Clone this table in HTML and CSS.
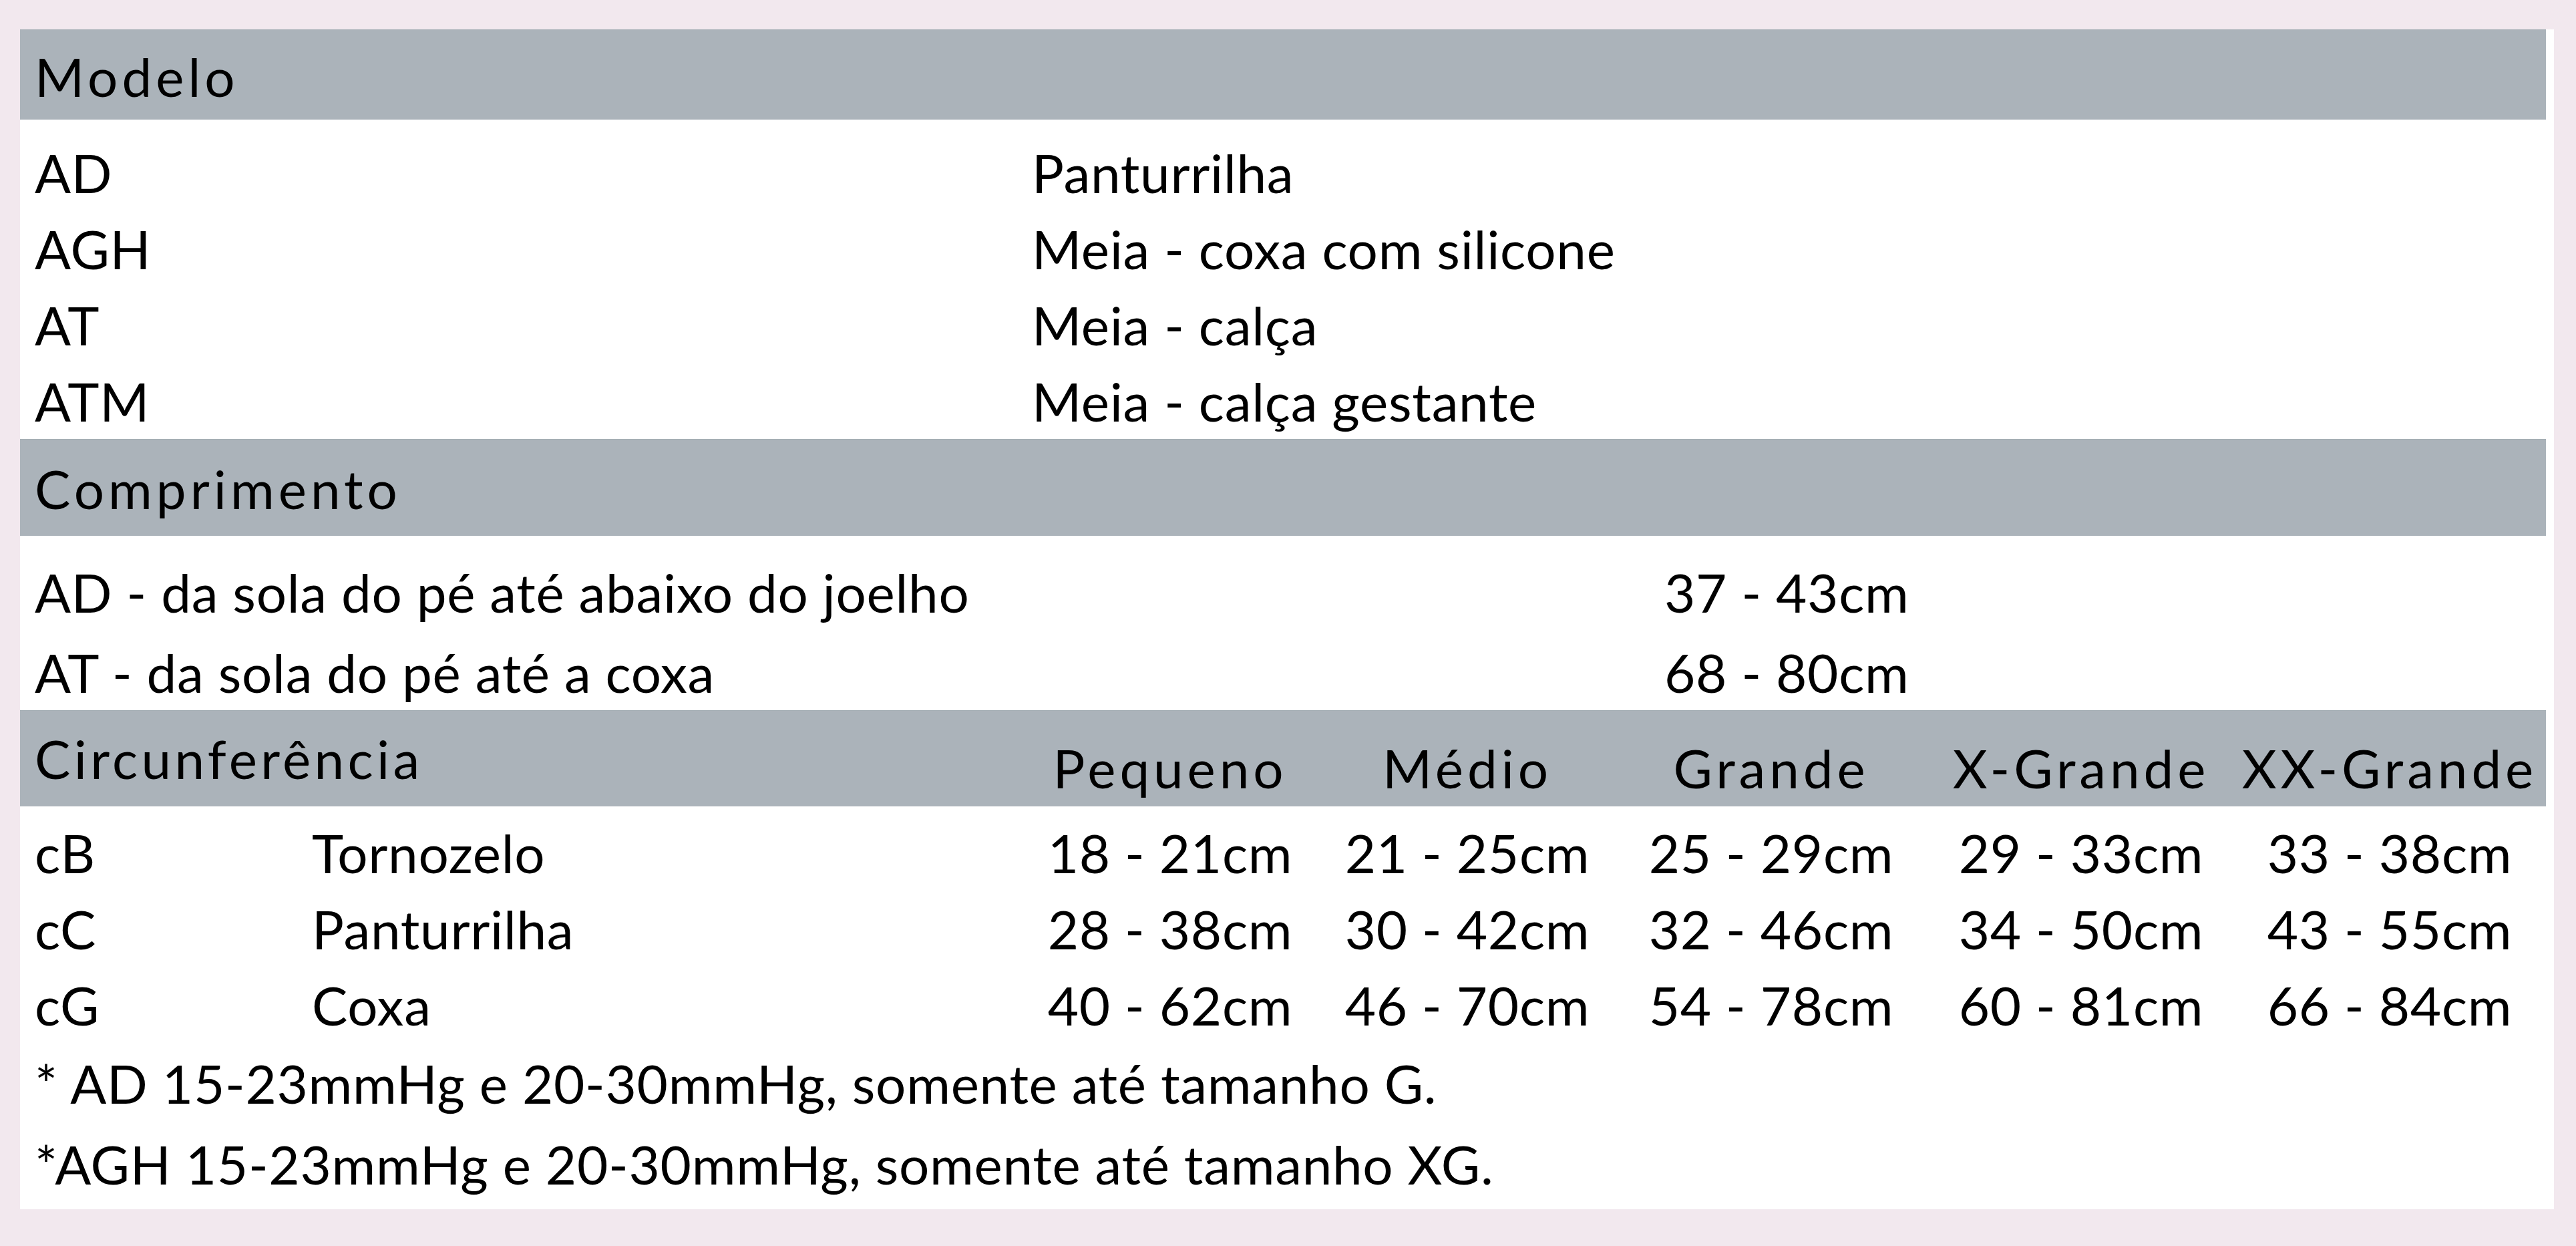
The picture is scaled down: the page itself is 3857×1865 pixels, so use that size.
FILE: index.html
```html
<!DOCTYPE html>
<html lang="pt-BR">
<head>
<meta charset="utf-8">
<title>Tabela de medidas</title>
<link rel="stylesheet" href="styles.css">
</head>
<body>
<div class="panel">
  <div class="band band-modelo"><span class="band-title">Modelo</span></div>
  <div class="rows rows-modelo">
    <div class="cell">AD</div><div class="cell">Panturrilha</div>
    <div class="cell">AGH</div><div class="cell">Meia - coxa com silicone</div>
    <div class="cell">AT</div><div class="cell">Meia - calça</div>
    <div class="cell">ATM</div><div class="cell">Meia - calça gestante</div>
  </div>

  <div class="band band-comp"><span class="band-title">Comprimento</span></div>
  <div class="rows rows-comp">
    <div class="cell">AD - da sola do pé até abaixo do joelho</div><div class="cell">37 - 43cm</div>
    <div class="cell">AT - da sola do pé até a coxa</div><div class="cell">68 - 80cm</div>
  </div>

  <div class="band band-circ circ-grid">
    <span class="band-title circ-title">Circunferência</span>
    <span class="size">Pequeno</span>
    <span class="size">Médio</span>
    <span class="size">Grande</span>
    <span class="size">X-Grande</span>
    <span class="size">XX-Grande</span>
  </div>
  <div class="rows rows-circ circ-grid">
    <div class="cell">cB</div><div class="cell">Tornozelo</div>
    <div class="cell val">18 - 21cm</div><div class="cell val">21 - 25cm</div><div class="cell val">25 - 29cm</div><div class="cell val">29 - 33cm</div><div class="cell val">33 - 38cm</div>
    <div class="cell">cC</div><div class="cell">Panturrilha</div>
    <div class="cell val">28 - 38cm</div><div class="cell val">30 - 42cm</div><div class="cell val">32 - 46cm</div><div class="cell val">34 - 50cm</div><div class="cell val">43 - 55cm</div>
    <div class="cell">cG</div><div class="cell">Coxa</div>
    <div class="cell val">40 - 62cm</div><div class="cell val">46 - 70cm</div><div class="cell val">54 - 78cm</div><div class="cell val">60 - 81cm</div><div class="cell val">66 - 84cm</div>
  </div>
  <div class="notes">
    <p class="note">* AD 15-23mmHg e 20-30mmHg, somente até tamanho G.</p>
    <p class="note">*AGH 15-23mmHg e 20-30mmHg, somente até tamanho XG.</p>
  </div>
</div>
</body>
</html>
```

FILE: styles.css
```css
html, body {
  margin: 0;
  padding: 0;
}
body {
  background: #f2e8ee;
  width: 3857px;
  height: 1865px;
  overflow: hidden;
  font-family: "Lato", "Open Sans", "Liberation Sans", sans-serif;
  font-weight: 400;
  font-size: 80px;
  letter-spacing: 0.7px;
  color: #000;
}
.panel {
  margin: 44px 0 0 30px;
  width: 3794px;
  background: #ffffff;
  padding-bottom: 7px;
}
.band {
  background: #abb3ba;
  margin-right: 12px;
  padding-left: 22px;
  box-sizing: border-box;
  border-top: 1px solid #a3adb3;
}
.band-title {
  letter-spacing: 6px;
}
.band-modelo {
  height: 135px;
  line-height: 134px;
  padding-top: 2px;
}
.band-comp {
  height: 145px;
  line-height: 145px;
  padding-top: 1px;
}
.rows {
  display: grid;
  padding-left: 22px;
}
.rows-modelo {
  grid-template-columns: 1493px 1fr;
  line-height: 114px;
  padding-top: 22px;
  height: 478px;
  box-sizing: border-box;
}
.rows-comp {
  grid-template-columns: 2440px 1fr;
  line-height: 120px;
  padding-top: 24px;
  height: 261px;
  box-sizing: border-box;
}
.circ-grid {
  display: grid;
  grid-template-columns: 415px 1065px 440px 450px 460px 468px 456px;
}
.band-circ {
  height: 144px;
  align-items: start;
}
.circ-title {
  grid-column: 1 / span 2;
  line-height: 144px;
  margin-top: -1px;
  letter-spacing: 5.3px;
}
.size {
  text-align: center;
  letter-spacing: 5.9px;
  line-height: 144px;
  padding-top: 13px;
}
.rows-circ {
  line-height: 114px;
  padding-top: 12px;
}
.val {
  text-align: center;
}
.notes {
  padding-left: 22px;
}
.note {
  margin: 0;
  line-height: 121px;
}
```
